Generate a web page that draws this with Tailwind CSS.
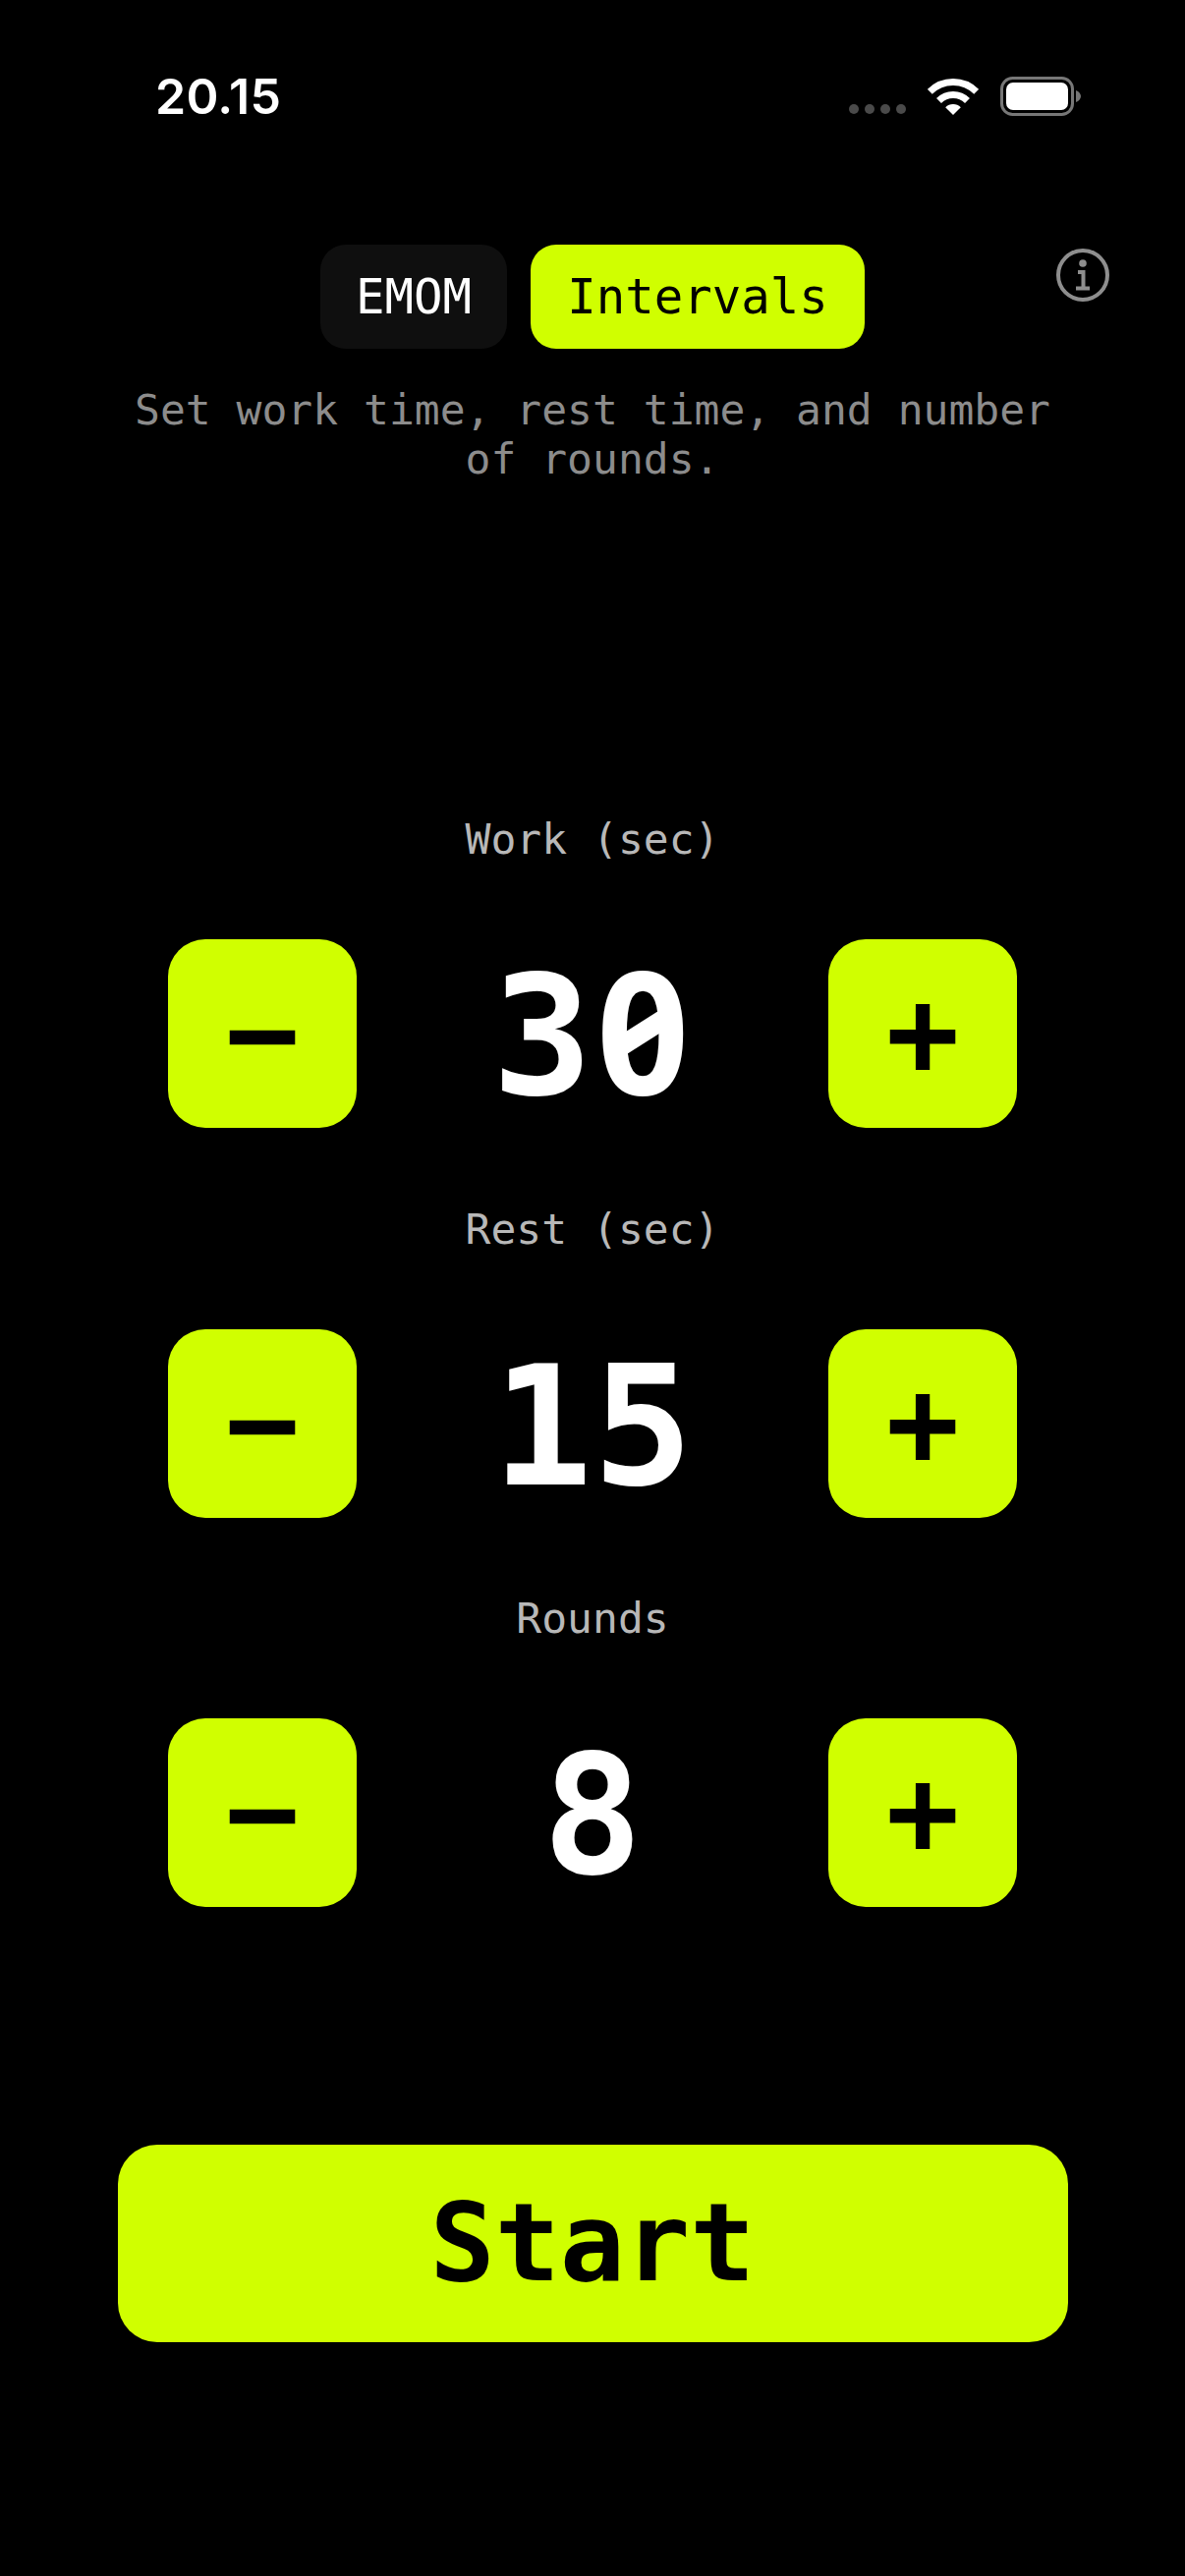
<!DOCTYPE html>
<html><head><meta charset="utf-8"><script src="https://cdn.jsdelivr.net/npm/@tailwindcss/browser@4"></script></head>
<body class="bg-black">
<div class="w-[1206px] h-[2622px] bg-black flex flex-col items-center font-['DejaVu_Sans_Mono',monospace] overflow-hidden">
  <div class="w-full h-[249px] shrink-0 flex items-start justify-between pl-[158px] pr-[106px] pt-[66px]">
    <span class="font-['Inter',sans-serif] font-semibold text-[50px] leading-[64px] tracking-[0.25px] text-white">20.15</span>
    <div class="flex items-start mt-[12px]">
      <div class="flex gap-[6px] mt-[28px] mr-[22px]">
        <i class="block size-[10px] rounded-full bg-[#4a4a4a]"></i><i class="block size-[10px] rounded-full bg-[#4a4a4a]"></i><i class="block size-[10px] rounded-full bg-[#4a4a4a]"></i><i class="block size-[10px] rounded-full bg-[#4a4a4a]"></i>
      </div>
      <svg class="mr-[22px] mt-[1px]" width="52" height="38" viewBox="0 0 52 38" fill="none"><path d="M2.3 14.3A33.5 33.5 0 0 1 49.7 14.3M11.5 23.5A20.5 20.5 0 0 1 40.5 23.5" stroke="#fff" stroke-width="7"/><path d="M26 38L18.2 30.2A11 11 0 0 1 33.8 30.2Z" fill="#fff"/></svg>
      <svg width="82" height="40" viewBox="0 0 82 40" fill="none"><rect x="1.5" y="1.5" width="72" height="37" rx="11" stroke="#777" stroke-width="3"/><rect x="6" y="6" width="63" height="28" rx="7" fill="#fff"/><path d="M77 14C80 15 82 17.500 82 20C82 22.500 80 25 77 26Z" fill="#777"/></svg>
    </div>
  </div>
  <div class="relative w-full flex justify-center gap-[24px] h-[106px] shrink-0">
    <div class="w-[190px] h-full pt-[2px] rounded-[26px] bg-[#0f0f0f] text-white text-[49px] font-medium flex items-center justify-center">EMOM</div>
    <div class="w-[340px] h-full pt-[2px] rounded-[26px] bg-[#d0ff00] text-black text-[49px] flex items-center justify-center">Intervals</div>
    <svg class="absolute left-[1073px] top-[2px]" width="58" height="58" viewBox="0 0 58 58" fill="none"><circle cx="29" cy="29" r="25" stroke="#8e8e8e" stroke-width="4"/><circle cx="29" cy="17" r="3.800" fill="#8e8e8e"/><path d="M24 26H29.500V42.500M22 42.500H36" stroke="#8e8e8e" stroke-width="4"/></svg>
  </div>
  <p class="w-[960px] mt-[37px] text-center text-[43px] leading-[50px] text-[#8c8c8c] shrink-0">Set work time, rest time, and number of rounds.</p>

  <div class="mt-[337px] w-[864px] flex flex-col">
    <div class="h-[396.500px] flex flex-col items-center">
      <div class="text-[43px] leading-[50px] text-[#b8b8b8]">Work (sec)</div>
      <div class="mt-[77px] w-full flex items-center justify-between">
        <div class="size-[192px] rounded-[38px] bg-[#d0ff00] flex items-center justify-center text-black text-[124px] font-bold leading-none">−</div>
        <div class="relative pt-[6px] text-white text-[170px] font-bold leading-none">30<svg class="absolute left-[102px] top-[37px]" width="102" height="100" viewBox="0 0 102 100"><circle cx="51" cy="50" r="15" fill="#000"/><path d="M26 65.900L76 34.100" stroke="#fff" stroke-width="20"/></svg></div>
        <div class="size-[192px] rounded-[38px] bg-[#d0ff00] flex items-center justify-center text-black text-[124px] font-bold leading-none">+</div>
      </div>
    </div>
    <div class="h-[396.500px] flex flex-col items-center">
      <div class="text-[43px] leading-[50px] text-[#b8b8b8]">Rest (sec)</div>
      <div class="mt-[77px] w-full flex items-center justify-between">
        <div class="size-[192px] rounded-[38px] bg-[#d0ff00] flex items-center justify-center text-black text-[124px] font-bold leading-none">−</div>
        <div class="pt-[6px] text-white text-[170px] font-bold leading-none">15</div>
        <div class="size-[192px] rounded-[38px] bg-[#d0ff00] flex items-center justify-center text-black text-[124px] font-bold leading-none">+</div>
      </div>
    </div>
    <div class="h-[396.500px] flex flex-col items-center">
      <div class="text-[43px] leading-[50px] text-[#b8b8b8]">Rounds</div>
      <div class="mt-[77px] w-full flex items-center justify-between">
        <div class="size-[192px] rounded-[38px] bg-[#d0ff00] flex items-center justify-center text-black text-[124px] font-bold leading-none">−</div>
        <div class="pt-[6px] text-white text-[170px] font-bold leading-none">8</div>
        <div class="size-[192px] rounded-[38px] bg-[#d0ff00] flex items-center justify-center text-black text-[124px] font-bold leading-none">+</div>
      </div>
    </div>
  </div>
  <div class="mt-[164.500px] w-[967px] h-[201px] rounded-[40px] bg-[#d0ff00] flex items-center justify-center text-black text-[110px] font-bold">Start</div>
</div>
</body></html>
